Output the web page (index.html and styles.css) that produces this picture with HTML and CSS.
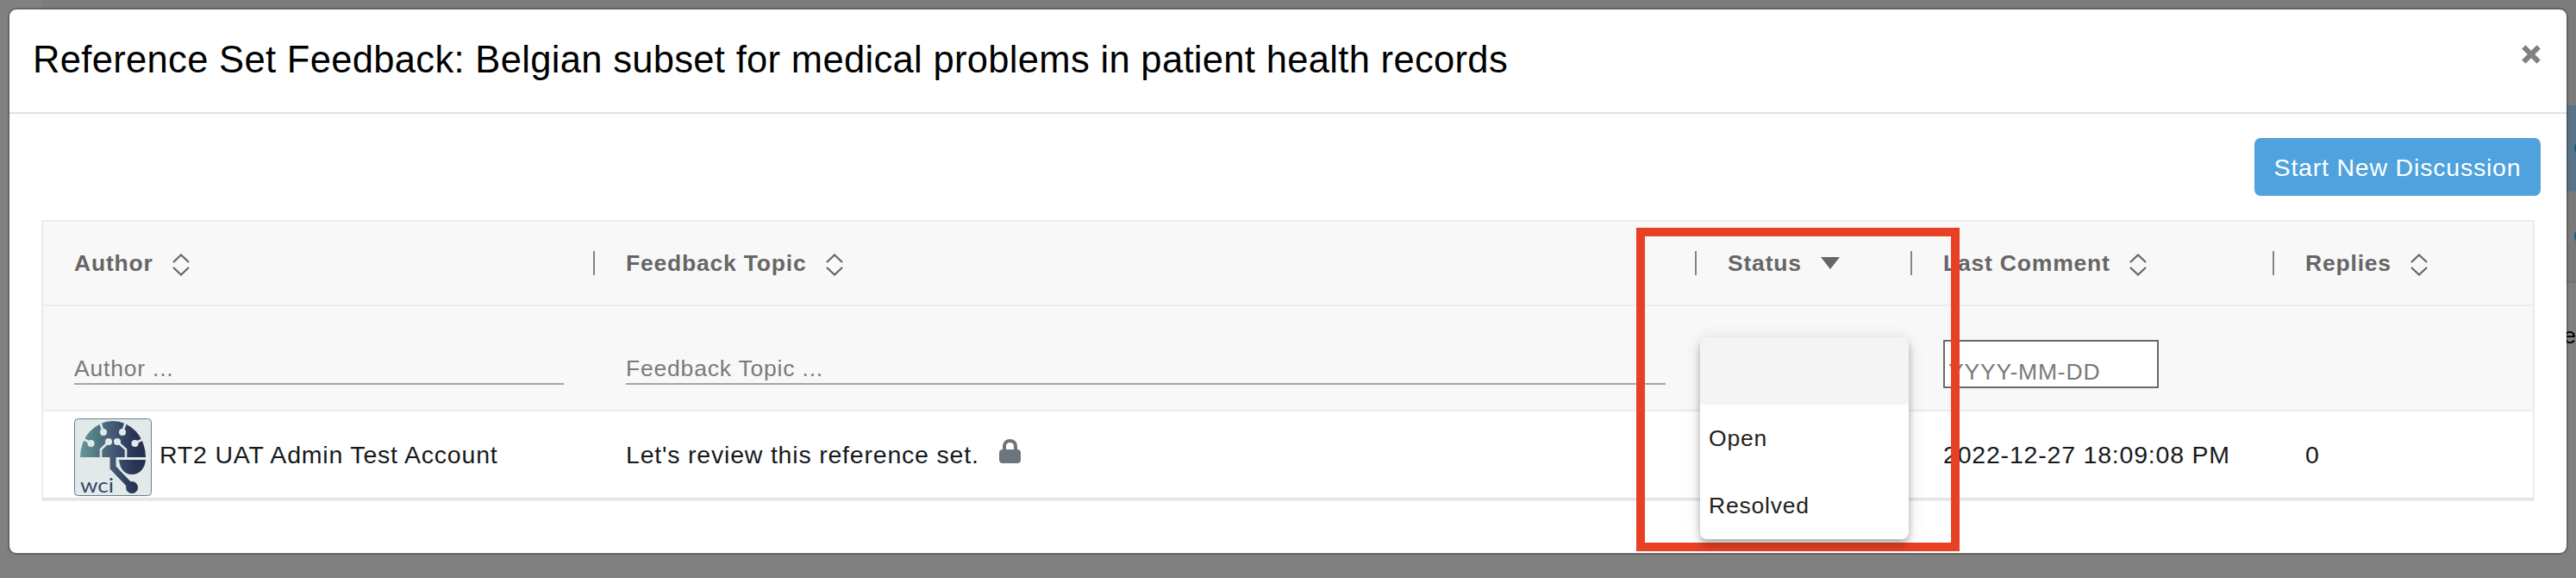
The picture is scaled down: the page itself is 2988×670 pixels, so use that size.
FILE: index.html
```
<!DOCTYPE html>
<html lang="en">
<head>
    <meta charset="UTF-8">
    <meta name="viewport" content="width=device-width, initial-scale=1.0">
    <title>Reference Set Feedback</title>
    <link rel="stylesheet" href="styles.css">
</head>
<body>
    <!-- page behind the modal -->
    <div class="page-behind">
        <div class="page-top"></div>
        <div class="page-selected"><span class="page-icon"></span></div>
        <div class="page-row"><span class="page-icon"></span></div>
        <span class="page-text">e</span>
    </div>

    <div class="modal">
        <div class="modal-header">
            <h4 class="modal-title">Reference Set Feedback: Belgian subset for medical problems in patient health records</h4>
            <button class="close" aria-label="Close">
                <svg width="22" height="22" viewBox="0 0 22 22"><path d="M2.300 2.300L19.700 19.700M19.700 2.300L2.300 19.700" stroke="#808080" stroke-width="6" fill="none"/></svg>
            </button>
        </div>

        <div class="modal-body">
            <div class="toolbar">
                <button class="btn btn-primary">Start New Discussion</button>
            </div>

            <div class="table">
                <div class="row row-head">
                    <div class="cell">Author
                        <svg class="sort" width="20" height="26" viewBox="0 0 20 26"><path d="M1 10L10 1.5L19 10M1 16L10 24.5L19 16"/></svg>
                    </div>
                    <div class="cell">Feedback Topic
                        <svg class="sort" width="20" height="26" viewBox="0 0 20 26"><path d="M1 10L10 1.5L19 10M1 16L10 24.5L19 16"/></svg>
                    </div>
                    <div class="cell">Status
                        <svg class="sort-down" width="22" height="14" viewBox="0 0 22 14"><path d="M0 0H22L11 14Z" fill="#666"/></svg>
                    </div>
                    <div class="cell">Last Comment
                        <svg class="sort" width="20" height="26" viewBox="0 0 20 26"><path d="M1 10L10 1.5L19 10M1 16L10 24.5L19 16"/></svg>
                    </div>
                    <div class="cell">Replies
                        <svg class="sort" width="20" height="26" viewBox="0 0 20 26"><path d="M1 10L10 1.5L19 10M1 16L10 24.5L19 16"/></svg>
                    </div>
                </div>

                <div class="row row-filter">
                    <div class="cell"><input class="filter" type="text" placeholder="Author ..."></div>
                    <div class="cell"><input class="filter" type="text" placeholder="Feedback Topic ..."></div>
                    <div class="cell">
                        <div class="menu">
                            <div class="menu-item active"></div>
                            <div class="menu-item">Open</div>
                            <div class="menu-item">Resolved</div>
                        </div>
                    </div>
                    <div class="cell"><input class="filter-date" type="text" placeholder="YYYY-MM-DD"></div>
                    <div class="cell"></div>
                </div>

                <div class="row row-data">
                    <div class="cell">
                        <svg class="avatar" width="90" height="90" viewBox="0 0 90 90">
                            <defs>
                                <linearGradient id="brain" gradientUnits="userSpaceOnUse" x1="7" y1="0" x2="83" y2="0">
                                    <stop offset="0" stop-color="#659896"/>
                                    <stop offset="0.5" stop-color="#435a75"/>
                                    <stop offset="0.8" stop-color="#2b3658"/>
                                    <stop offset="1" stop-color="#252d50"/>
                                </linearGradient>
                            </defs>
                            <rect x="0.5" y="0.5" width="89" height="89" rx="4" fill="#e2eae9" stroke="#687b93"/>
                            <path d="M7 45A38 42 0 0 1 83 45Z" fill="url(#brain)"/>
                            <path d="M52 48H83C82 58 76 65 67 65S53 58 52 48Z" fill="url(#brain)"/>
                            <path d="M45 44V57L67 80" fill="none" stroke="url(#brain)" stroke-width="7"/>
                            <circle cx="67" cy="80" r="7" fill="url(#brain)"/>
                            <path d="M31 46V36L40 27M60 46V36L50 27M30 4L34 16M60 4L56 16M11 24L20 29M80 24L70 29" fill="none" stroke="#e2eae9" stroke-width="2.600"/>
                            <g fill="#e2eae9">
                                <circle cx="34" cy="16" r="4"/>
                                <circle cx="56" cy="16" r="4"/>
                                <circle cx="40" cy="27" r="4"/>
                                <circle cx="50" cy="27" r="4"/>
                                <circle cx="19.500" cy="29" r="4"/>
                                <circle cx="70.500" cy="29" r="4"/>
                            </g>
                            <text class="avatar-text" x="7" y="86" textLength="39" lengthAdjust="spacingAndGlyphs">wci</text>
                        </svg>
                        <span>RT2 UAT Admin Test Account</span>
                    </div>
                    <div class="cell">
                        <span>Let's review this reference set.</span>
                        <svg class="lock" width="25" height="28" viewBox="0 0 25 28">
                            <rect x="0" y="12" width="25" height="16" rx="4" fill="#6c757d"/>
                            <path d="M6 14V8.500C6 4.500 8.500 2 12.500 2S19 4.500 19 8.500V14" fill="none" stroke="#6c757d" stroke-width="4"/>
                        </svg>
                    </div>
                    <div class="cell"></div>
                    <div class="cell"><span>2022-12-27 18:09:08 PM</span></div>
                    <div class="cell"><span>0</span></div>
                </div>
            </div>
        </div>
    </div>

    <div class="highlight"></div>
</body>
</html>
```

FILE: styles.css
```
* {
    box-sizing: border-box;
}

body {
    margin: 0;
    height: 670px;
    padding: 9px;
    background-color: #808080;
    font-family: "Liberation Sans", Arial, sans-serif;
    font-size: 28.5px;
    letter-spacing: 0.8px;
    color: #16191c;
    overflow: hidden;
}

/* page behind the modal */
.page-behind {
    position: absolute;
    top: 0;
    left: 0;
    width: 2988px;
    height: 670px;
    overflow: hidden;
}

.page-top {
    height: 122px;
    margin-left: 48px;
    background-color: #7c7c7c;
}

.page-selected {
    height: 100px;
    background: linear-gradient(to right, #808080 48px, #5b7389 48px);
}

.page-row {
    height: 106px;
    margin-left: 48px;
    background-color: #797979;
    border-bottom: 3px solid #747477;
}

.page-selected,
.page-row {
    display: flex;
    justify-content: flex-end;
    align-items: center;
}

.page-icon {
    width: 20px;
    height: 20px;
    margin-right: -18px;
    border: 3px solid #14607f;
    border-radius: 50%;
}

.page-text {
    position: absolute;
    right: 0;
    top: 373px;
    font-size: 26px;
    letter-spacing: 0;
    line-height: 32px;
    color: #000;
}

/* modal */
.modal {
    position: relative;
    width: 2970px;
    height: 634px;
    background-color: #fff;
    background-clip: padding-box;
    border: 2px solid rgba(0, 0, 0, 0.2);
    border-radius: 10px;
}

.modal-header {
    display: flex;
    justify-content: space-between;
    height: 121px;
    padding: 0 30px 0 27px;
    border-bottom: 2px solid #dee2e6;
}

.modal-title {
    margin: 0;
    font-size: 43.5px;
    font-weight: normal;
    letter-spacing: 0.33px;
    line-height: 117px;
    color: #000;
    white-space: nowrap;
}

.close {
    height: 22px;
    margin-top: 41px;
    padding: 0;
    border: none;
    background: none;
}

.close svg {
    display: block;
}

.toolbar {
    display: flex;
    justify-content: flex-end;
    padding: 28px 30px;
}

.btn {
    width: 332px;
    height: 67px;
    padding: 2px 0 0;
    border: none;
    border-radius: 7px;
    font: inherit;
    letter-spacing: inherit;
}

.btn-primary {
    background-color: #4fa2de;
    color: #fff;
}

/* table */
.table {
    margin: 0 37px;
    border: 2px solid #ececec;
}

.row {
    display: grid;
    grid-template-columns: 640px 1278px 250px 420px 300px;
}

.cell {
    display: flex;
    align-items: center;
    padding: 0 36px;
    white-space: nowrap;
}

.row-head {
    height: 98px;
    background-color: #f8f8f8;
    border-bottom: 2px solid #ececec;
    font-size: 26.5px;
    font-weight: bold;
    color: #666;
}

.row-head .cell {
    background: linear-gradient(#858585, #858585) no-repeat right 34px / 2px 28px;
}

.row-head .cell:last-child {
    background: none;
}

.sort {
    margin: 4px 0 0 22px;
    fill: none;
    stroke: #666;
    stroke-width: 2.2;
}

.sort-down {
    margin-left: 22px;
}

.row-filter {
    height: 122px;
    background-color: #f8f8f8;
    border-bottom: 2px solid #ececec;
}

.row-filter .cell {
    position: relative;
    align-items: flex-start;
}

.filter,
.filter-date {
    font: inherit;
    font-size: 26.5px;
    letter-spacing: inherit;
    outline: none;
    border-radius: 0;
}

.filter {
    width: 100%;
    height: 36px;
    margin-top: 55px;
    padding: 0;
    background: none;
    border: none;
    border-bottom: 2px solid #a6a6a6;
}

.filter-date {
    width: 250px;
    height: 56px;
    margin-top: 39px;
    padding: 19px 4px 0;
    background-color: #fff;
    border: 2px solid #696969;
}

.filter::placeholder,
.filter-date::placeholder {
    color: #7a7a7a;
}

/* status select menu */
.menu {
    position: absolute;
    left: 4px;
    top: 36px;
    z-index: 1;
    width: 242px;
    border-radius: 8px;
    background-color: #fff;
    overflow: hidden;
    box-shadow: 0 4px 8px -2px rgba(0, 0, 0, 0.2), 0 8px 10px 0 rgba(0, 0, 0, 0.14), 0 2px 20px 0 rgba(0, 0, 0, 0.12);
}

.menu-item {
    height: 78px;
    padding-left: 10px;
    font-size: 26.5px;
    line-height: 78px;
    color: #212121;
}

.menu-item.active {
    background-color: #f4f4f4;
}

.row-data {
    height: 102px;
    border-bottom: 2px solid #dee2e9;
}

.row-data span {
    padding-top: 1px;
}

.avatar {
    margin: 6px 9px 0 0;
}

.avatar-text {
    font-family: Lato, sans-serif;
    font-size: 24px;
    letter-spacing: 0;
    fill: #35456a;
}

.lock {
    margin: -8px 0 0 23px;
}

/* red callout around the status column */
.highlight {
    position: absolute;
    left: 1898px;
    top: 264px;
    width: 375px;
    height: 375px;
    border: 10px solid #e84025;
}
```
